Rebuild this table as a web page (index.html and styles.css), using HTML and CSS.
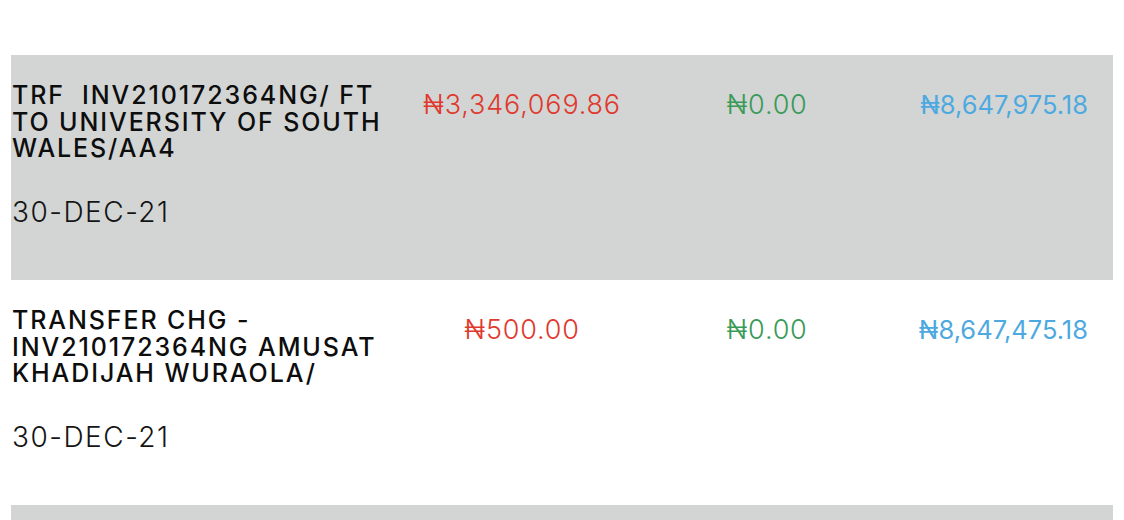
FILE: index.html
```html
<!DOCTYPE html>
<html>
<head>
<meta charset="utf-8">
<link rel="stylesheet" href="styles.css">
</head>
<body>
<div class="list">
  <div class="row shaded">
    <div class="desc">
      <div class="narr">TRF&nbsp; INV210172364NG/ FT TO UNIVERSITY OF SOUTH WALES/AA4</div>
      <div class="date">30-DEC-21</div>
    </div>
    <div class="amt debit">₦3,346,069.86</div>
    <div class="amt credit">₦0.00</div>
    <div class="amt bal">₦8,647,975.18</div>
  </div>
  <div class="row">
    <div class="desc">
      <div class="narr">TRANSFER CHG - INV210172364NG AMUSAT KHADIJAH WURAOLA/</div>
      <div class="date">30-DEC-21</div>
    </div>
    <div class="amt debit">₦500.00</div>
    <div class="amt credit">₦0.00</div>
    <div class="amt bal">₦8,647,475.18</div>
  </div>
  <div class="row shaded last"></div>
</div>
</body>
</html>
```

FILE: styles.css
```css
html, body {
  margin: 0;
  padding: 0;
  background: #ffffff;
  height: 520px;
  overflow: hidden;
}
body {
  font-family: "Inter", "Noto Sans", sans-serif;
  color: #111111;
}
.list {
  padding: 55px 11px 0 11px;
}
.row {
  height: 225px;
  box-sizing: border-box;
  display: grid;
  grid-template-columns: 388px 244px 246px 1fr;
  padding: 27px 25px 0 1px;
  align-items: start;
}
.row.last {
  height: 15px;
}
.shaded {
  background: #d2d5d4;
}
.narr {
  font-size: 25px;
  font-weight: 500;
  line-height: 26.5px;
  letter-spacing: 1.9px;
  color: #0d0d0d;
}
.date {
  font-size: 28px;
  font-weight: 300;
  margin-top: 33px;
  letter-spacing: 1.5px;
  color: #141414;
}
.amt {
  font-size: 27px;
  font-weight: 300;
  margin-top: 6px;
  letter-spacing: 0.8px;
  text-align: center;
}
.bal {
  text-align: right;
  font-size: 25.5px;
  font-weight: 400;
  letter-spacing: 0;
  margin-top: 7px;
}
.debit { color: #e0392e; }
.credit { color: #3a9a57; }
.bal { color: #4ea9e0; }
```
